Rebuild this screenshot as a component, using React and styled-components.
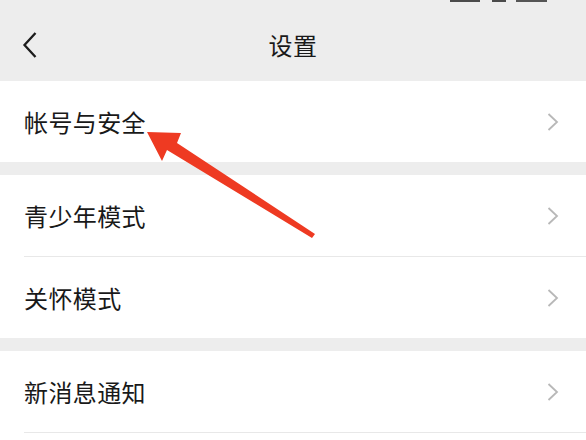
import React from 'react';
import styled, { createGlobalStyle } from 'styled-components';

const GlobalStyle = createGlobalStyle`
  html, body {
    margin: 0;
    padding: 0;
    background: #ffffff;
  }
  body {
    font-family: "Noto Sans CJK SC", "Noto Sans", sans-serif;
    color: #191919;
  }
`;

const Page = styled.div`
  position: relative;
  width: 586px;
  height: 440px;
  overflow: hidden;
  background: #ffffff;
`;

const Header = styled.div`
  display: flex;
  flex-direction: column;
  height: 81px;
  background: #ededed;
`;

// only the bottom edge of the status bar is still visible
const StatusStrip = styled.div`
  display: flex;
  align-items: flex-start;
  height: 3px;
  overflow: hidden;
  padding-left: 450px;
  gap: 12px;
`;

const StatusBit = styled.div`
  width: ${p => p.w}px;
  height: 2px;
  background: ${p => (p.outline ? '#3a3a3a' : '#2e2e2e')};
  opacity: 0.85;
  margin-left: ${p => p.ml || 0}px;
`;

const NavBar = styled.div`
  flex: 1;
  display: grid;
  grid-template-columns: 1fr auto 1fr;
  align-items: center;
  padding-top: 6px;
`;

const BackButton = styled.div`
  display: flex;
  align-items: center;
  padding-left: 22px;
`;

const Title = styled.div`
  font-size: 24px;
  line-height: 1;
  color: #191919;
  letter-spacing: 0.5px;
`;

const Group = styled.div`
  background: #ffffff;
`;

const Gap = styled.div`
  height: 13px;
  background: #ededed;
`;

const Row = styled.div`
  position: relative;
  display: flex;
  align-items: center;
  justify-content: space-between;
  height: 81px;
  padding-right: 26px;
  border-top: ${p => (p.divided ? '1px solid #e8e8e8' : 'none')};
  margin-left: ${p => (p.divided ? '24px' : '0')};
  padding-left: ${p => (p.divided ? '0' : '24px')};
`;

const Label = styled.span`
  font-size: 24px;
  line-height: 1;
  letter-spacing: 0.4px;
  color: #191919;
`;

const Overlay = styled.svg`
  position: absolute;
  left: 0;
  top: 0;
  pointer-events: none;
`;

const Chevron = () => (
  <svg width="14" height="20" viewBox="0 0 14 20">
    <path d="M2.5 2 L11 10 L2.5 18" fill="none" stroke="#b8b8b8" strokeWidth="1.8" />
  </svg>
);

const BackIcon = () => (
  <svg width="16" height="28" viewBox="0 0 16 28">
    <path d="M13.5 2 L2.5 14 L13.5 26" fill="none" stroke="#1c1c1c" strokeWidth="2.3" />
  </svg>
);

const groups = [
  ['帐号与安全'],
  ['青少年模式', '关怀模式'],
  ['新消息通知', ''],
];

export default function App() {
  return (
    <Page>
      <GlobalStyle />
      <Header>
        <StatusStrip>
          <StatusBit w={30} />
          <StatusBit w={14} />
          <StatusBit w={31} outline ml={-2} />
        </StatusStrip>
        <NavBar>
          <BackButton><BackIcon /></BackButton>
          <Title>设置</Title>
          <div />
        </NavBar>
      </Header>

      {groups.map((items, gi) => (
        <React.Fragment key={gi}>
          {gi > 0 && <Gap />}
          <Group>
            {items.map((name, i) => (
              <Row key={i} divided={i > 0 ? 1 : 0}>
                <Label>{name}</Label>
                {name && <Chevron />}
              </Row>
            ))}
          </Group>
        </React.Fragment>
      ))}

      <Overlay width="586" height="440" viewBox="0 0 586 440">
        <polygon
          points="147,132 181,133 177,143 315,234 312,238 167,150 162,161"
          fill="#ee3a22"
        />
      </Overlay>
    </Page>
  );
}
